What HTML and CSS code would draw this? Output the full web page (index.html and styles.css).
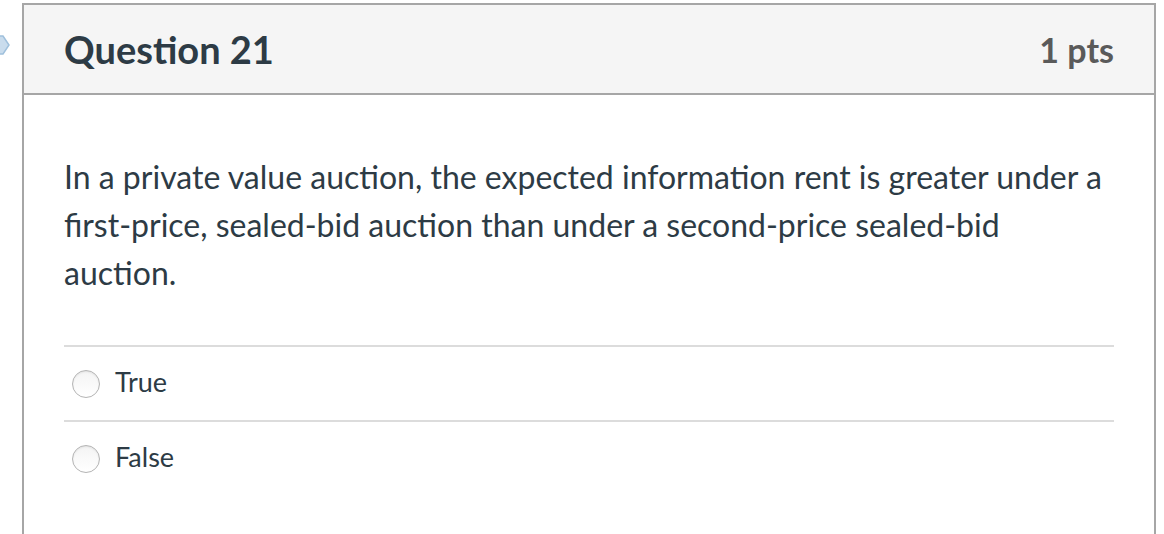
FILE: index.html
```html
<!DOCTYPE html>
<html>
<head>
<meta charset="utf-8">
<link rel="stylesheet" href="styles.css">
</head>
<body>
<div class="flag">
  <svg width="10" height="22" viewBox="0 0 10 22"><path d="M-6 2 L3 2 L9 11 L3 20 L-6 20 Z" fill="#c9dced" stroke="#9fc0dc" stroke-width="1.5"/></svg>
</div>
<div class="card">
  <div class="header">
    <h2 class="title">Question 21</h2>
    <div class="points">1 pts</div>
  </div>
  <div class="content">
    <p class="question">In a private value auction, the expected information rent is greater under a first-price, sealed-bid auction than under a second-price sealed-bid auction.</p>
    <div class="answers">
      <div class="answer"><span class="radio"></span><span class="label">True</span></div>
      <div class="answer"><span class="radio"></span><span class="label">False</span></div>
    </div>
  </div>
</div>
</body>
</html>
```
FILE: styles.css
```css
html, body {
  margin: 0;
  padding: 0;
  background: #fff;
  font-family: Lato, "Noto Sans", sans-serif;
  color: #2d3b45;
}
body {
  padding: 3px 0 0 22px;
  height: 531px;
  overflow: hidden;
  position: relative;
}
.flag {
  position: absolute;
  left: 0;
  top: 34px;
}
.card {
  width: 1130px;
  border: 2px solid #a6a6a6;
  border-bottom: none;
  min-height: 600px;
}
.header {
  height: 88px;
  background: #f5f5f5;
  border-bottom: 2px solid #a6a6a6;
  display: flex;
  align-items: center;
  justify-content: space-between;
  padding: 0 40px 0 40px;
}
.title {
  margin: 0;
  font-size: 38px;
  font-weight: 700;
  color: #2d3b45;
}
.points {
  font-size: 34px;
  font-weight: 700;
  color: #5a5a5a;
}
.content {
  padding: 58px 40px 0 40px;
}
.question {
  margin: 0 0 48px 0;
  font-size: 32px;
  line-height: 48px;
}
.answer {
  border-top: 2px solid #dcdcdc;
  height: 73px;
  display: flex;
  align-items: center;
  padding-left: 8px;
}
.radio {
  width: 26px;
  height: 26px;
  border-radius: 50%;
  border: 1px solid #b4b4b4;
  background: linear-gradient(#f4f4f4, #ffffff);
  box-shadow: inset 0 1px 2px rgba(0,0,0,0.08);
  margin-right: 15px;
  flex: none;
}
.label {
  font-size: 27px;
  padding-bottom: 4px;
}
```
